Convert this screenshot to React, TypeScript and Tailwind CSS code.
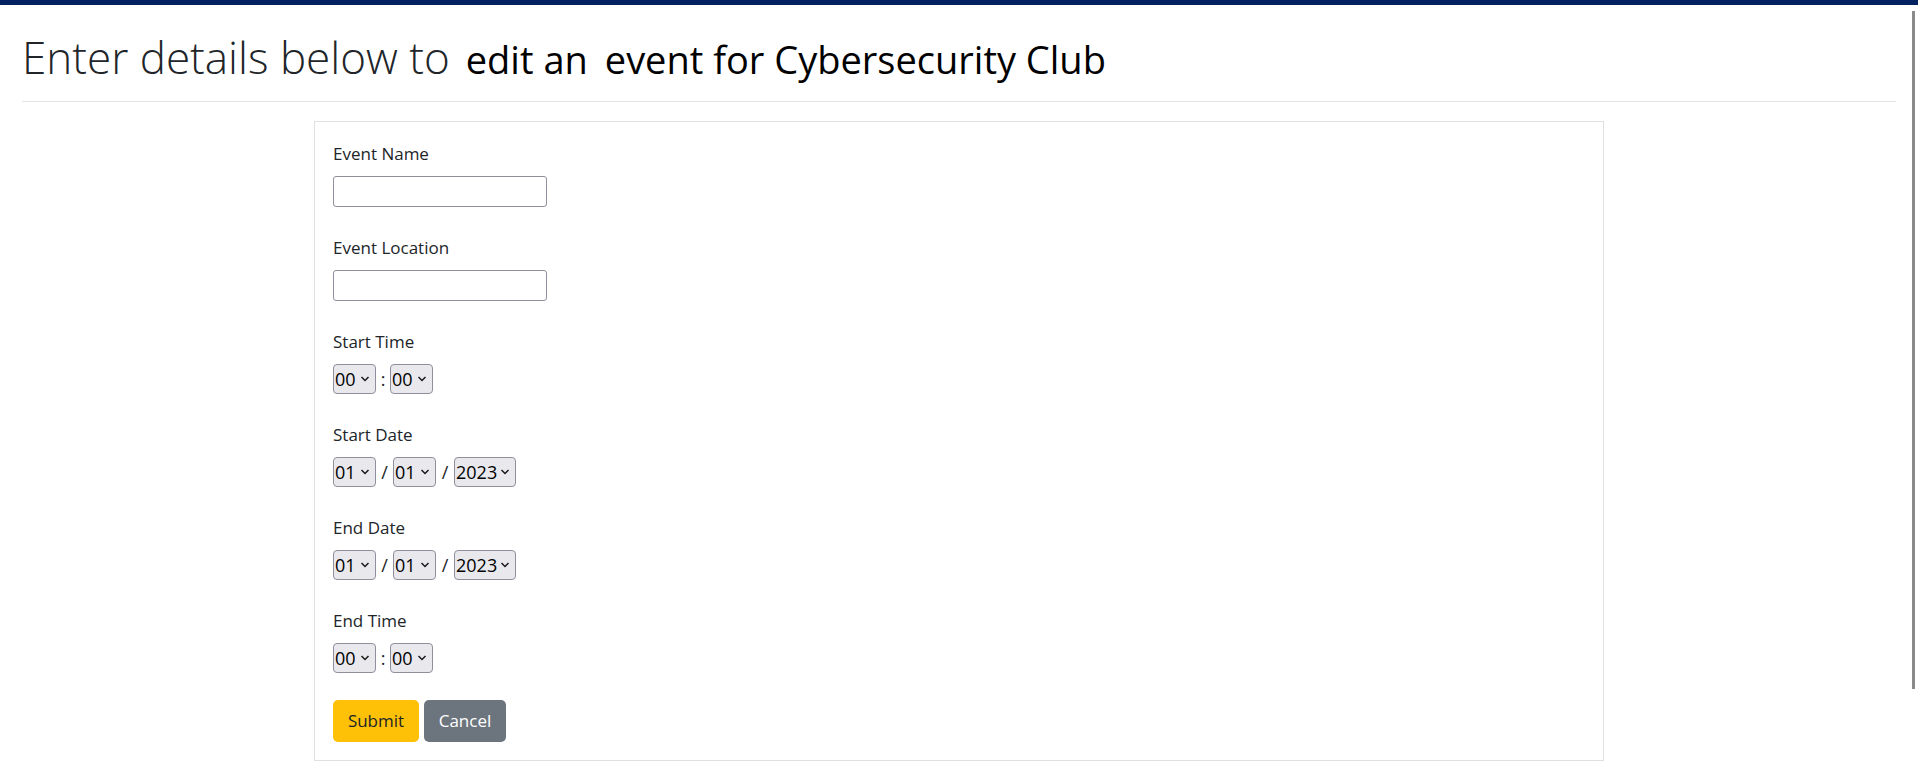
import type { ReactNode } from "react";

const font = { fontFamily: '"Open Sans", "Noto Sans", sans-serif' };

function Chevron() {
  return (
    <svg
      className="pointer-events-none absolute right-[6px] top-1/2 -translate-y-1/2"
      width="10"
      height="7"
      viewBox="0 0 10 7"
      fill="none"
    >
      <path d="M1.5 1.5l3.5 3.5 3.5-3.5" stroke="#1a1a1a" strokeWidth="1.5" />
    </svg>
  );
}

function Picker({ value, wide = false }: { value: string; wide?: boolean }) {
  return (
    <span className="relative inline-flex">
      <select
        defaultValue={value}
        className={`h-[30px] appearance-none rounded-[4px] border border-[#8f8f9d] bg-[#e9e9ed] pl-[1px] text-[18px] leading-none text-black ${
          wide ? "w-[62px]" : "w-[43px]"
        }`}
      >
        <option value={value}>{value}</option>
      </select>
      <Chevron />
    </span>
  );
}

function Sep({ children, w }: { children: ReactNode; w: string }) {
  return <span className={`${w} text-center text-[18px] leading-none text-[#212529]`}>{children}</span>;
}

function Field({ label, children }: { label: string; children: ReactNode }) {
  return (
    <div className="mb-[27px]">
      <label className="mb-[9px] block text-[17px] leading-[27px] text-[#212529]">{label}</label>
      {children}
    </div>
  );
}

function TimeRow() {
  return (
    <div className="flex items-center">
      <Picker value="00" />
      <Sep w="w-[14px]">:</Sep>
      <Picker value="00" />
    </div>
  );
}

function DateRow() {
  return (
    <div className="flex items-center">
      <Picker value="01" />
      <Sep w="w-[17px]">/</Sep>
      <Picker value="01" />
      <Sep w="w-[18px]">/</Sep>
      <Picker value="2023" wide />
    </div>
  );
}

export default function App() {
  return (
    <div className="min-h-screen bg-white" style={font}>
      <div className="h-[5px] bg-[#012060]" />

      <div className="px-[22px]">
        <h1 className="flex items-baseline border-b border-[#e3e3e3] pb-[14px] pt-[24px] leading-[56px]">
          <span className="text-[44px] font-light text-[#212529]">Enter details below to</span>
          <span className="ml-[16px] text-[38px] text-black">edit an</span>
          <span className="ml-[17px] text-[38px] text-black">event for Cybersecurity Club</span>
        </h1>
      </div>

      <form className="mx-auto mt-[19px] w-[1290px] border border-[#e0e0e0] px-[18px] pt-[18px] pb-[18px]">
        <Field label="Event Name">
          <input type="text" className="block h-[31px] w-[214px] rounded-[3px] border border-[#8f8f9d] bg-white" />
        </Field>
        <Field label="Event Location">
          <input type="text" className="block h-[31px] w-[214px] rounded-[3px] border border-[#8f8f9d] bg-white" />
        </Field>
        <Field label="Start Time">
          <TimeRow />
        </Field>
        <Field label="Start Date">
          <DateRow />
        </Field>
        <Field label="End Date">
          <DateRow />
        </Field>
        <Field label="End Time">
          <TimeRow />
        </Field>

        <div className="flex gap-[5px]">
          <button type="button" className="h-[42px] w-[86px] rounded-[5px] bg-[#ffc107] text-[17px] text-[#212529]">
            Submit
          </button>
          <button type="button" className="h-[42px] w-[82px] rounded-[5px] bg-[#6c757d] text-[17px] text-white">
            Cancel
          </button>
        </div>
      </form>

      <div className="fixed right-[3px] top-[11px] h-[678px] w-[3px] bg-[#8a8a8a]" />
    </div>
  );
}
